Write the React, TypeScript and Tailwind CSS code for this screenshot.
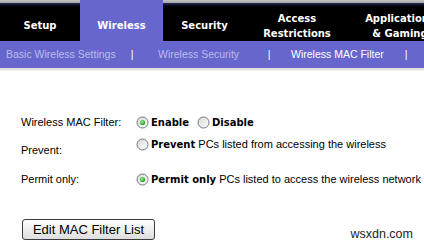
import React from 'react'

const bold = { fontFamily: '"DejaVu Sans", Verdana, sans-serif' }
const arial = { fontFamily: '"Liberation Sans", Arial, sans-serif' }

function Radio({ checked }: { checked?: boolean }) {
  return (
    <svg width="13" height="13" viewBox="0 0 13 13" className="shrink-0">
      <defs>
        <linearGradient id="rfill" x1="0" y1="0" x2="1" y2="1">
          <stop offset="0" stopColor="#d8d8d0" />
          <stop offset="1" stopColor="#ffffff" />
        </linearGradient>
        <radialGradient id="rdot" cx="0.4" cy="0.4" r="0.6">
          <stop offset="0" stopColor="#9cf09c" />
          <stop offset="1" stopColor="#1f9a24" />
        </radialGradient>
      </defs>
      <circle cx="6.5" cy="6.5" r="5.5" fill="url(#rfill)" stroke="#6a7888" strokeWidth="1" />
      {checked && <circle cx="6.5" cy="6.5" r="2.6" fill="url(#rdot)" />}
    </svg>
  )
}

function Tab({ label, w, active }: { label: React.ReactNode; w: string; active?: boolean }) {
  if (active) {
    return (
      <div className={`${w} shrink-0 bg-[#6666cc] flex flex-col`}>
        <div className="h-[8px]" />
        <div className="flex-1 pt-[2px] flex items-center justify-center text-white text-[10px] font-bold leading-[15px] text-center" style={bold}>
          {label}
        </div>
      </div>
    )
  }
  return (
    <div className={`${w} shrink-0 flex flex-col bg-black`}>
      <div className="h-[3px] bg-gradient-to-b from-[#c4c4c4] to-[#a4a4a4]" />
      <div className="h-[5px] bg-gradient-to-b from-[#2c2c5c] to-black" />
      <div className="flex-1 pt-[2px] flex items-center justify-center text-white text-[10px] font-bold leading-[15px] text-center whitespace-nowrap" style={bold}>
        {label}
      </div>
    </div>
  )
}

export default function App() {
  return (
    <div className="w-[424px] h-[244px] overflow-hidden bg-white relative" style={arial}>
      {/* Tabs */}
      <div className="flex h-[41px] w-[452px]">
        <Tab w="w-[80px]" label="Setup" />
        <Tab w="w-[83px]" label="Wireless" active />
        <Tab w="w-[83px]" label="Security" />
        <Tab w="w-[102px]" label={<span>Access<br />Restrictions</span>} />
        <Tab w="w-[104px]" label={<span>Applications<br />&amp; Gaming</span>} />
      </div>

      {/* Sub navigation */}
      <div className="h-[27px] pt-[1px] bg-[#6666cc] flex items-center text-[10.5px] whitespace-nowrap">
        <span className="w-[128px] pl-[6px] text-[#bcbcec]">Basic Wireless Settings</span>
        <span className="w-[8px] text-center text-white">|</span>
        <span className="w-[130px] pl-[22px] text-[#bcbcec]">Wireless Security</span>
        <span className="w-[6px] text-center text-white">|</span>
        <span className="w-[131px] pl-[19px] text-white">Wireless MAC Filter</span>
        <span className="w-[6px] text-center text-white">|</span>
      </div>
      <div className="h-[3px] bg-gradient-to-b from-[#dcdcd4] to-[#f2f2f0]" />

      {/* Form */}
      <div className="pl-[21px] pt-[43px] text-[11px] text-black">
        <div className="flex items-center h-[16px]">
          <div className="w-[115px]">Wireless MAC Filter:</div>
          <Radio checked />
          <span className="ml-[2px] w-[46px] text-[10px] font-bold" style={bold}>Enable</span>
          <Radio />
          <span className="ml-[2px] text-[10px] font-bold" style={bold}>Disable</span>
        </div>

        <div className="flex mt-[6px]">
          <div className="w-[115px] mt-[6px] leading-[16px]">Prevent:</div>
          <div className="flex items-center h-[16px] whitespace-nowrap">
            <Radio />
            <span className="ml-[2px] text-[10px] font-bold" style={bold}>Prevent</span>
            <span>&nbsp;PCs listed from accessing the wireless</span>
          </div>
        </div>

        <div className="flex items-center h-[16px] mt-[13px] whitespace-nowrap">
          <div className="w-[115px]">Permit only:</div>
          <Radio checked />
          <span className="ml-[2px] text-[10px] font-bold" style={bold}>Permit only</span>
          <span>&nbsp;PCs listed to access the wireless network</span>
        </div>

        <button className="mt-[32px] ml-[1px] w-[133px] h-[21px] rounded-[3px] border border-[#3c3c3c] bg-gradient-to-b from-white to-[#dedede] text-[13px] text-black leading-none">
          Edit MAC Filter List
        </button>
      </div>

      <div className="absolute right-[11px] bottom-[0px] text-[12.5px] text-[#222]">wsxdn.com</div>
    </div>
  )
}
